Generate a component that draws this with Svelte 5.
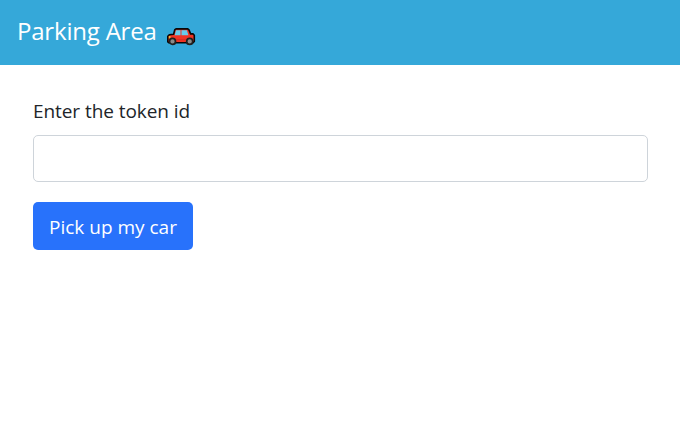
<script>
  let token = $state('');
</script>

<div class="page">
  <header>
    <span class="brand">Parking Area</span>
    <svg class="car" viewBox="0 0 29 18" aria-hidden="true">
      <path d="M9 .9h11.8l1.2 1 1.6 4H26l1.3 1.3v6.3L26 14.8H2l-1.2-1V8.3L2.3 6.8 6.6 6.2 7.8 1.7z" fill="#f03222" stroke="#080808" stroke-width="1.6" stroke-linejoin="round" />
      <path d="M9 2.3h4.5v4.9H7.7zM14.5 2.3h5.4l1.5 4.9h-6.9z" fill="#67cbea" />
      <path d="M2 11.7h24" stroke="#c3261b" stroke-width=".6" />
      <path d="M1.8 8h1.7v2.4H1.8z" fill="#f9b22b" />
      <g fill="#8a8a8a" stroke="#202020" stroke-width="1.7">
        <circle cx="5.5" cy="13.4" r="3" />
        <circle cx="22.7" cy="13.4" r="3" />
      </g>
    </svg>
  </header>
  <main>
    <label for="token">Enter the token id</label>
    <input id="token" type="text" bind:value={token} />
    <button type="button">Pick up my car</button>
  </main>
</div>

<style>
  :global(body) { margin: 0; background: #fff; }
  .page {
    min-height: 440px;
    font-family: "Segoe UI", "Open Sans", "Noto Sans", sans-serif;
    color: #212529;
  }
  header {
    box-sizing: border-box;
    display: flex;
    align-items: flex-start;
    height: 65px;
    padding: 13px 17px;
    background: #35a8d9;
    color: #fff;
  }
  .brand { width: 150px; font-size: 24px; line-height: 36px; white-space: nowrap; letter-spacing: -0.2px; }
  .car { width: 29px; height: 18px; margin-top: 15px; }
  main {
    display: flex;
    flex-direction: column;
    align-items: flex-start;
    padding: 31px 32px 0 33px;
  }
  label { font-size: 19px; line-height: 30px; margin-bottom: 9px; white-space: nowrap; letter-spacing: -0.07px; }
  input {
    box-sizing: border-box;
    width: 100%;
    height: 47px;
    padding: 6px 15px;
    border: 1px solid #ced4da;
    border-radius: 5px;
    background: #fff;
    font: inherit;
    font-size: 19px;
    outline: none;
  }
  button {
    width: 160px;
    height: 48px;
    margin-top: 20px;
    padding: 2px 0 0 16px;
    border: 0;
    border-radius: 5px;
    background: #2872fb;
    color: #fff;
    font: inherit;
    font-size: 19px;
    text-align: left;
    white-space: nowrap;
    letter-spacing: 0;
  }
</style>
